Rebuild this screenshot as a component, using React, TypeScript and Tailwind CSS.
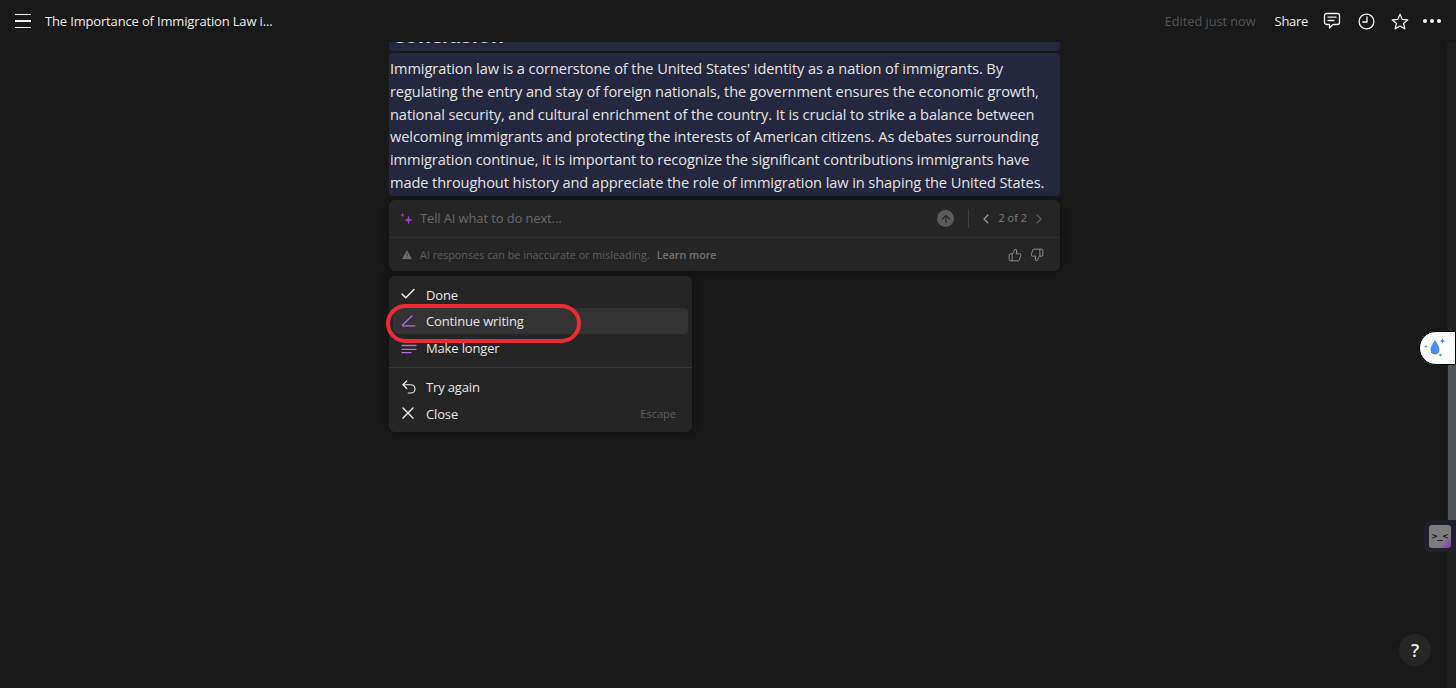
import React from 'react';
import { Check, ChevronLeft, ChevronRight, Undo2, X, ThumbsUp, ThumbsDown, ArrowUp, TriangleAlert } from 'lucide-react';

const bodyLines = [
  "Immigration law is a cornerstone of the United States' identity as a nation of immigrants. By",
  'regulating the entry and stay of foreign nationals, the government ensures the economic growth,',
  'national security, and cultural enrichment of the country. It is crucial to strike a balance between',
  'welcoming immigrants and protecting the interests of American citizens. As debates surrounding',
  'immigration continue, it is important to recognize the significant contributions immigrants have',
  'made throughout history and appreciate the role of immigration law in shaping the United States.',
];

const Sparkles = () => (
  <svg width="14" height="14" viewBox="0 0 14 14" fill="#a044d8">
    <path d="M8.5 3.5 L9.6 6.9 L13 8 L9.6 9.1 L8.5 12.5 L7.4 9.1 L4 8 L7.4 6.9 Z" />
    <path d="M2.5 0.5 L3.1 2.4 L5 3 L3.1 3.6 L2.5 5.5 L1.9 3.6 L0 3 L1.9 2.4 Z" />
  </svg>
);

const ContinueIcon = () => (
  <svg width="16" height="14" viewBox="0 0 16 14" fill="none" stroke="#b86fd8" strokeWidth="1.2" strokeLinecap="round">
    <path d="M1.5 11 L11 2" />
    <path d="M1.5 11.8 H14" />
  </svg>
);

const LongerIcon = () => (
  <svg width="16" height="14" viewBox="0 0 16 14" fill="none" stroke="#b86fd8" strokeWidth="1.3" strokeLinecap="round">
    <path d="M1 5.5 H15" />
    <path d="M1 9.3 H15" />
    <path d="M1 12.7 H10" />
  </svg>
);

const CommentIcon = () => (
  <svg width="18" height="18" viewBox="0 0 18 18" fill="none" stroke="#f2f2f2" strokeWidth="1.3" strokeLinejoin="round" strokeLinecap="round">
    <path d="M3.5 1.5 H14.5 A2 2 0 0 1 16.5 3.5 V10.5 A2 2 0 0 1 14.5 12.5 H10 L6.5 16 V12.5 H3.5 A2 2 0 0 1 1.5 10.5 V3.5 A2 2 0 0 1 3.5 1.5 Z" />
    <path d="M5 5.2 H13" />
    <path d="M5 8.5 H11" />
  </svg>
);

const ClockIcon = () => (
  <svg width="17" height="17" viewBox="0 0 17 17" fill="none" stroke="#f2f2f2" strokeWidth="1.3" strokeLinecap="round" strokeLinejoin="round">
    <circle cx="8.5" cy="8.5" r="7.4" />
    <path d="M9 3.8 V9 H4.8" />
  </svg>
);

const StarIcon = () => (
  <svg width="18" height="17" viewBox="0 0 18 17" fill="none" stroke="#f2f2f2" strokeWidth="1.3" strokeLinejoin="round">
    <path d="M9 1.2 L11.2 6.3 L16.8 6.8 L12.5 10.4 L13.9 15.9 L9 13 L4.1 15.9 L5.5 10.4 L1.2 6.8 L6.8 6.3 Z" />
  </svg>
);

const MenuRow = ({ icon, label, hint, active }: { icon: React.ReactNode; label: string; hint?: string; active?: boolean }) => (
  <div className={`mx-1 flex h-[26.5px] items-center rounded pl-2 pr-2 ${active ? 'bg-[#333333]' : ''}`}>
    <div className="flex w-[25px] shrink-0 items-center text-[#ececec]">{icon}</div>
    <span className="pt-[2px] text-[13px] tracking-[-0.15px] text-[#e6e6e6]">{label}</span>
    {hint && <span className="ml-auto pt-[2px] pr-1 text-[11px] text-[#5f5f5f]">{hint}</span>}
  </div>
);

export default function App() {
  return (
    <div className="relative flex h-[688px] w-[1456px] flex-col overflow-hidden bg-[#191919] font-['Open_Sans','Noto_Sans',sans-serif]">
      {/* Top bar */}
      <header className="z-10 flex h-[42px] shrink-0 items-center bg-[#191919] pl-[15px] pr-[15px]">
        <div className="flex w-[16px] flex-col gap-[5px]">
          <div className="h-[1.5px] bg-[#f0f0f0]" />
          <div className="h-[1.5px] bg-[#f0f0f0]" />
          <div className="h-[1.5px] bg-[#f0f0f0]" />
        </div>
        <span className="ml-[14px] pt-[1px] text-[13px] tracking-[-0.16px] text-[#ececec]">The Importance of Immigration Law i...</span>
        <div className="ml-auto flex items-center">
          <span className="pt-[1px] text-[12.7px] text-[#545454]">Edited just now</span>
          <span className="ml-[19px] pt-[1px] text-[13px] tracking-[-0.3px] text-[#ececec]">Share</span>
          <div className="ml-[15px]"><CommentIcon /></div>
          <div className="ml-[17px]"><ClockIcon /></div>
          <div className="ml-[16px]"><StarIcon /></div>
          <div className="ml-[14px] flex gap-[3px]">
            <div className="h-1 w-1 rounded-full bg-[#f0f0f0]" />
            <div className="h-1 w-1 rounded-full bg-[#f0f0f0]" />
            <div className="h-1 w-1 rounded-full bg-[#f0f0f0]" />
          </div>
        </div>
      </header>

      {/* Document column */}
      <main className="ml-[389px] flex w-[671px] flex-col">
        <div className="h-[9px] overflow-hidden rounded-b-sm bg-[#24273d]">
          <div className="mt-[-22px] pl-[3px] text-[20.5px] leading-[30px] font-bold text-[#d0d0d0]">Conclusion</div>
        </div>
        <div className="mt-[2px] h-[143px] rounded-sm bg-[#24273d] pt-[4px] pl-[1px]">
          {bodyLines.map((line) => (
            <div key={line} className="whitespace-nowrap text-[14.6px] leading-[22.75px] tracking-[-0.09px] text-[#e4e4e4]">{line}</div>
          ))}
        </div>

        {/* AI prompt */}
        <div className="mt-[4px] h-[71px] rounded-md bg-[#252525] shadow-[0_0_8px_rgba(0,0,0,0.5)]">
          <div className="flex h-[38px] items-center border-b border-[#303030] pl-[11px] pr-[13px]">
            <Sparkles />
            <span className="ml-[6px] pt-[1px] text-[13px] tracking-[-0.13px] text-[#696969]">Tell AI what to do next...</span>
            <div className="ml-auto flex h-[17px] w-[17px] items-center justify-center rounded-full bg-[#5a5a5a]">
              <ArrowUp size={12} strokeWidth={2.2} color="#252525" />
            </div>
            <div className="ml-[14px] h-[19px] w-px bg-[#404040]" />
            <ChevronLeft size={16} strokeWidth={1.6} color="#a0a0a0" className="ml-[9px]" />
            <span className="ml-[4px] text-[11px] text-[#7d7d7d]">2 of 2</span>
            <ChevronRight size={16} strokeWidth={1.6} color="#5e5e5e" className="ml-[4px]" />
          </div>
          <div className="flex h-[33px] items-center pl-[12px] pr-[16px]">
            <TriangleAlert size={12} fill="#6b6b6b" color="#252525" strokeWidth={1.5} />
            <span className="ml-[7px] pt-[1px] text-[10.8px] text-[#5f5f5f]">AI responses can be inaccurate or misleading.</span>
            <span className="ml-[7px] pt-[1px] text-[10.7px] font-semibold text-[#707070]">Learn more</span>
            <ThumbsUp size={14} strokeWidth={1.3} color="#a8a8a8" className="ml-auto" />
            <ThumbsDown size={14} strokeWidth={1.3} color="#a8a8a8" className="ml-[8px]" />
          </div>
        </div>

        {/* Actions menu */}
        <div className="mt-[5px] flex h-[156px] w-[303px] flex-col rounded-md bg-[#252525] pt-[5px] shadow-[0_0_10px_rgba(0,0,0,0.45)]">
          <MenuRow icon={<Check size={18} strokeWidth={2} className="-ml-[2px]" />} label="Done" />
          <MenuRow icon={<ContinueIcon />} label="Continue writing" active />
          <MenuRow icon={<LongerIcon />} label="Make longer" />
          <div className="my-[6px] h-px bg-[#383838]" />
          <MenuRow icon={<Undo2 size={18} strokeWidth={1.6} className="-ml-[1px]" />} label="Try again" />
          <MenuRow icon={<X size={20} strokeWidth={1.6} className="-ml-[3px]" />} label="Close" hint="Escape" />
        </div>
      </main>

      {/* Red annotation */}
      <div className="absolute top-[304px] left-[386px] h-[39px] w-[195px] rounded-[20px] border-4 border-[#ee2b33]" />

      {/* Scrollbar */}
      <div className="absolute top-[42px] right-0 h-[646px] w-[9px] bg-[#1e1e1e]" />
      <div className="absolute top-[365px] right-0 h-[183px] w-[8px] bg-[#52565b]" />

      {/* Grammar extension pill */}
      <div className="absolute top-[331px] right-0 flex h-[34px] w-[37px] items-center rounded-l-[17px] border border-black bg-white pl-[3px]">
        <svg width="24" height="24" viewBox="0 0 24 24" fill="#4a90e8">
          <path d="M12 4 C14.5 8 16.5 10.5 16.5 14 A4.5 4.5 0 0 1 7.5 14 C7.5 10.5 9.5 8 12 4 Z" />
          <path d="M19.5 2 L20.3 4.2 L22.5 5 L20.3 5.8 L19.5 8 L18.7 5.8 L16.5 5 L18.7 4.2 Z" />
          <path d="M3 8.5 L3.5 10 L5 10.5 L3.5 11 L3 12.5 L2.5 11 L1 10.5 L2.5 10 Z" />
          <circle cx="17.5" cy="19" r="1.2" />
        </svg>
      </div>

      {/* Terminal extension tile */}
      <div className="absolute top-[520px] left-[1424px] flex h-[32px] w-[32px] items-center rounded-l-md bg-[#20202c] pl-[5px]">
        <div className="flex h-[23px] w-[22px] items-center justify-center rounded-[3px] bg-[linear-gradient(135deg,#7b7b7b_70%,#8a2fc4_100%)]">
          <span className="font-['DejaVu_Sans_Mono',monospace] text-[9px] leading-none font-bold text-[#111111]">&gt;_&lt;</span>
        </div>
      </div>

      {/* Help */}
      <div className="absolute top-[634px] left-[1399px] flex h-8 w-8 items-center justify-center rounded-full bg-[#252525] text-[18px] font-semibold text-[#e8e8e8]">?</div>
    </div>
  );
}
